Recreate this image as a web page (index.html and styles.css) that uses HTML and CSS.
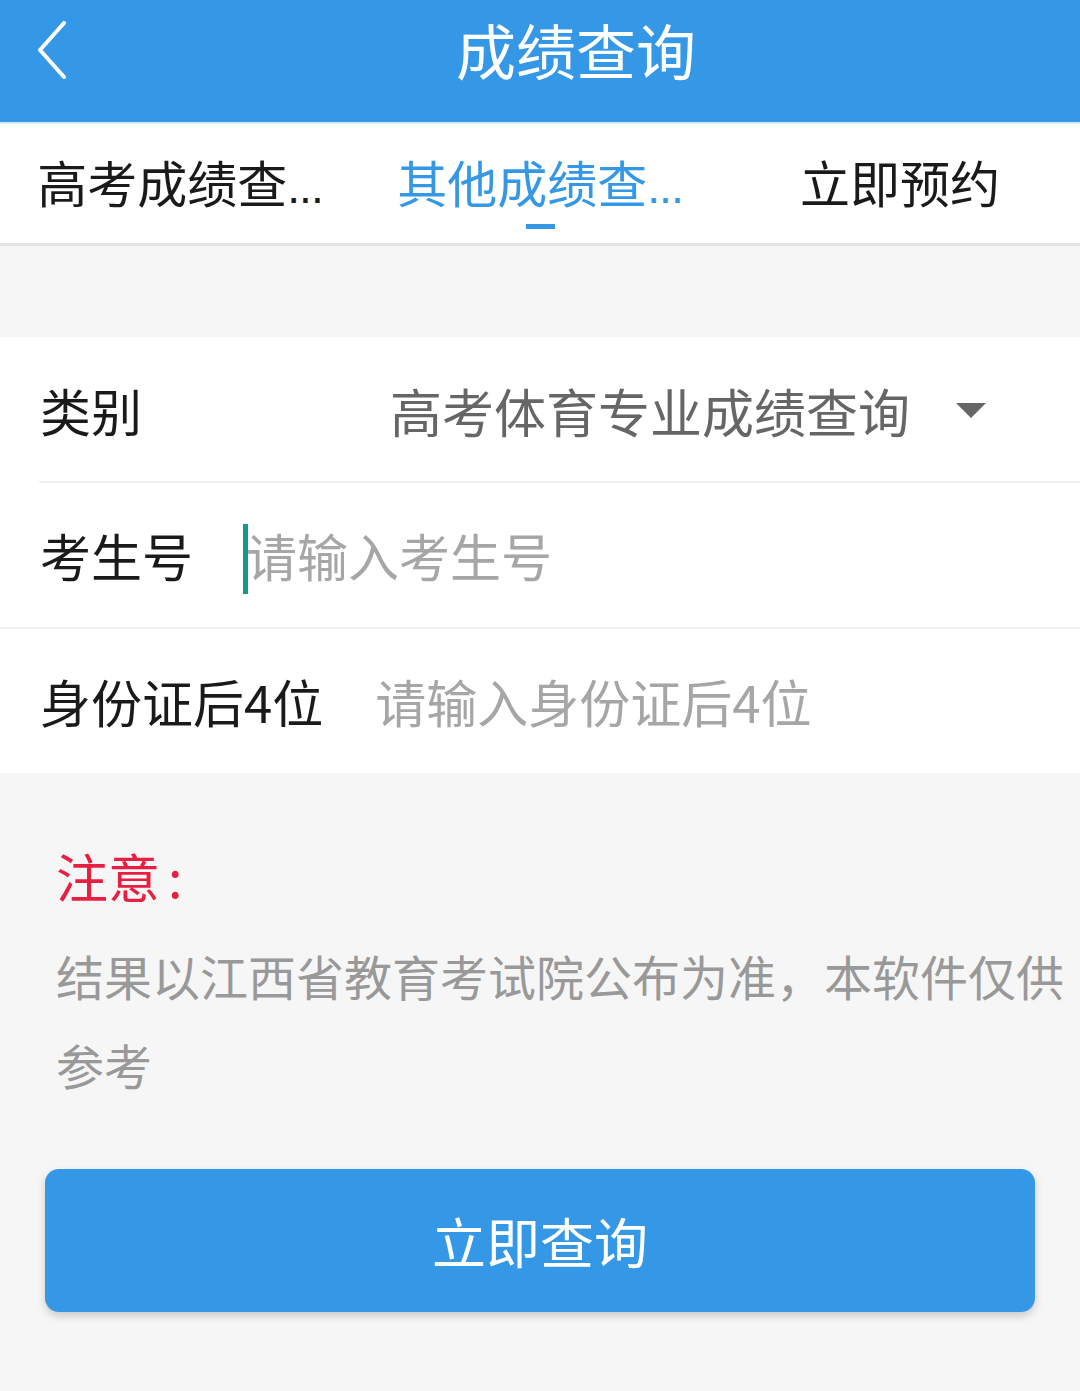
FILE: index.html
```html
<!DOCTYPE html>
<html lang="zh-CN">
<head>
  <meta charset="UTF-8">
  <meta name="viewport" content="width=device-width, initial-scale=1.0">
  <title>成绩查询</title>
  <link rel="stylesheet" href="styles.css">
</head>
<body>
  <div class="header">
    <div class="back">
      <svg width="32" height="58" viewBox="0 0 32 58">
        <polyline points="28,2 4,29 28,56" fill="none" stroke="#fff" stroke-width="4" stroke-linecap="round" stroke-linejoin="round"/>
      </svg>
    </div>
    <div class="title">成绩查询</div>
  </div>

  <ul class="tabs">
    <li><span>高考成绩查<em>...</em></span></li>
    <li class="active"><span>其他成绩查<em>...</em></span></li>
    <li><span>立即预约</span></li>
  </ul>

  <div class="gap"></div>

  <div class="form">
    <div class="row inset">
      <div class="label">类别</div>
      <div class="select">
        <span>高考体育专业成绩查询</span>
        <i class="arrow"></i>
      </div>
    </div>
    <div class="row">
      <div class="label">考生号</div>
      <div class="input focus"><span class="caret"></span>请输入考生号</div>
    </div>
    <div class="row last">
      <div class="label">身份证后4位</div>
      <div class="input">请输入身份证后4位</div>
    </div>
  </div>

  <div class="notice">
    <div class="notice-title">注意<em>:</em></div>
    <p>结果以江西省教育考试院公布为准，本软件仅供参考</p>
  </div>

  <div class="btn-wrap">
    <div class="btn">立即查询</div>
  </div>
</body>
</html>
```

FILE: styles.css
```css
*{
  margin: 0;
  padding: 0;
  box-sizing: border-box;
}
ul{
  list-style: none;
}
em{
  font-style: normal;
}
body{
  width: 1080px;
  min-height: 1391px;
  background-color: #f6f6f6;
  font-family: "Noto Sans CJK SC", "Noto Sans", sans-serif;
  color: #1a1a1a;
}
.header{
  display: flex;
  align-items: center;
  background-color: #3598e6;
  border-bottom: 2px solid #d8ecf8;
  height: 124px;
}
.back{
  width: 72px;
  padding-left: 36px;
  display: flex;
  align-items: center;
  padding-bottom: 22px;
}
.title{
  flex: 1;
  text-align: center;
  color: #fff;
  font-size: 60px;
  line-height: 1;
  padding-bottom: 24px;
}
.tabs{
  display: flex;
  height: 122px;
  background-color: #fff;
  border-bottom: 3px solid #e4e4e4;
}
.tabs li{
  flex: 1;
  position: relative;
  display: flex;
  justify-content: center;
  align-items: center;
  padding-bottom: 6px;
  font-size: 50px;
}
.tabs li span{
  white-space: nowrap;
}
.tabs li em{
  font-family: "Liberation Sans", sans-serif;
  font-size: 46px;
  letter-spacing: -1px;
}
.tabs .active{
  color: #3598e6;
}
.tabs .active::after{
  content: "";
  position: absolute;
  left: 166px;
  bottom: 14px;
  width: 29px;
  height: 5px;
  background-color: #3598e6;
}
.gap{
  height: 91px;
}
.form{
  background-color: #fff;
}
.row{
  height: 146px;
  display: flex;
  align-items: center;
  padding-left: 40px;
  border-bottom: 2px solid #f0f0f0;
  font-size: 51px;
}
.row.inset{
  border-bottom: none;
  position: relative;
}
.row.inset::after{
  content: "";
  position: absolute;
  left: 39px;
  right: 0;
  bottom: 0;
  height: 2px;
  background-color: #f0f0f0;
}
.row.last{
  border-bottom: none;
  height: 144px;
}
.label{
  white-space: nowrap;
}
.select{
  margin-left: 248px;
  display: flex;
  align-items: center;
  color: #666;
  font-size: 52px;
}
.arrow{
  width: 0;
  height: 0;
  margin-left: 46px;
  border-left: 15px solid transparent;
  border-right: 15px solid transparent;
  border-top: 15px solid #666;
}
.input{
  color: #a6a6a6;
  display: flex;
  align-items: center;
}
.input.focus{
  margin-left: 50px;
}
.caret{
  width: 5px;
  height: 70px;
  margin-right: -2px;
  background-color: #12998a;
  margin-top: 8px;
}
.last .input{
  margin-left: 52px;
}
.notice{
  padding: 66px 12px 0 56px;
}
.notice-title{
  color: #e91f42;
  font-size: 52px;
  line-height: 74px;
}
.notice-title em{
  margin-left: 8px;
}
.notice p{
  margin-top: 18px;
  color: #999;
  font-size: 48px;
  line-height: 89px;
}
.btn-wrap{
  padding: 60px 45px 0;
}
.btn{
  height: 143px;
  border-radius: 14px;
  background-color: #3598e6;
  color: #fff;
  font-size: 54px;
  display: flex;
  align-items: center;
  justify-content: center;
  box-shadow: 0 4px 8px rgba(0,0,0,0.18);
}
```
